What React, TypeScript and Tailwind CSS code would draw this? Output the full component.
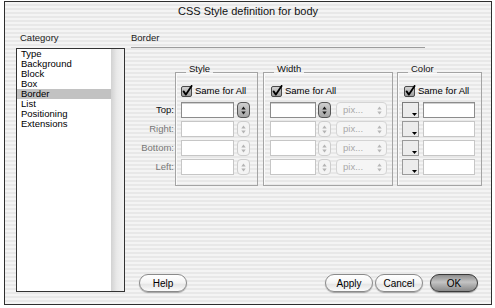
import React from "react";

const categories = ["Type", "Background", "Block", "Box", "Border", "List", "Positioning", "Extensions"];
const sides = ["Top:", "Right:", "Bottom:", "Left:"];

const CheckBox = () => (
  <svg width="12" height="12" viewBox="0 0 12 12" className="shrink-0">
    <defs>
      <linearGradient id="cbFill" x1="0" y1="0" x2="0" y2="1">
        <stop offset="0" stopColor="#d6d6d6" />
        <stop offset="1" stopColor="#9a9a9a" />
      </linearGradient>
    </defs>
    <rect x="0.5" y="1.5" width="10" height="10" rx="1.5" fill="url(#cbFill)" stroke="#4a4a4a" />
    <path d="M2.6 6.4 L4.9 9.6 L10.6 0.9" fill="none" stroke="#000" strokeWidth="1.8" strokeLinecap="round" strokeLinejoin="round" />
  </svg>
);

const Arrows = ({ color }: { color: string }) => (
  <svg width="5" height="9" viewBox="0 0 5 9">
    <polygon points="0.3,3.6 2.5,0.6 4.7,3.6" fill={color} />
    <polygon points="0.3,5.4 4.7,5.4 2.5,8.4" fill={color} />
  </svg>
);

const Stepper = ({ active }: { active?: boolean }) => (
  <div
    className={`w-[13px] h-[16px] shrink-0 rounded-[4px] border flex items-center justify-center ${
      active
        ? "border-[#555] bg-[linear-gradient(to_bottom,#cfcfcf,#a6a6a6)]"
        : "border-[#cdcdcd] bg-[#f4f4f4]"
    }`}
  >
    <Arrows color={active ? "#1a1a1a" : "#b4b4b4"} />
  </div>
);

const Field = ({ className, active }: { className: string; active?: boolean }) => (
  <div
    className={`h-[16px] shrink-0 bg-white border ${
      active ? "border-[#8c8c8c] shadow-[inset_0_1px_0_#d0d0d0]" : "border-[#c6c6c6]"
    } ${className}`}
  />
);

const UnitPopup = () => (
  <div className="w-[51px] h-[16px] shrink-0 rounded-[4px] border border-[#d4d4d4] bg-[#f5f5f5] flex items-center pl-[6px] pr-[4px] text-[#a9a9a9]">
    <span className="flex-1 leading-none">pix...</span>
    <Arrows color="#b8b8b8" />
  </div>
);

const Swatch = ({ active }: { active?: boolean }) => (
  <div
    className={`relative w-[17px] h-[16px] shrink-0 border bg-[#ececec] ${
      active ? "border-[#7c7c7c]" : "border-[#9a9a9a]"
    }`}
  >
    <svg width="5" height="3" viewBox="0 0 5 3" className="absolute right-[1px] bottom-[1px]">
      <polygon points="0,0 5,0 2.5,3" fill="#000" />
    </svg>
  </div>
);

const SameForAll = ({ className = "" }: { className?: string }) => (
  <div className={`h-[12px] flex items-center ${className}`}>
    <CheckBox />
    <span className="ml-[2px] leading-none">Same for All</span>
  </div>
);

const Group = ({ title, className, children }: { title: string; className: string; children: React.ReactNode }) => (
  <fieldset className={`border border-[#a4a4a4] shadow-[inset_1px_1px_0_#fbfbfb] ${className}`}>
    <legend className="ml-[10px] px-[3px] pb-[6px] leading-[12px] text-[#111]">{title}</legend>
    {children}
  </fieldset>
);

const Button = ({ label, primary, className = "" }: { label: string; primary?: boolean; className?: string }) => (
  <div
    className={`w-[48px] h-[18px] rounded-full border flex items-center justify-center text-[10px] text-black ${
      primary
        ? "border-[#3a3a3a] bg-[linear-gradient(to_bottom,#8e8e8e,#c4c4c4_45%,#b2b2b2_60%,#8a8a8a)] shadow-[0_1px_1px_rgba(0,0,0,0.35)]"
        : "border-[#8a8a8a] bg-[linear-gradient(to_bottom,#ffffff,#f4f4f4_50%,#e6e6e6_60%,#fbfbfb)] shadow-[0_1px_1px_rgba(0,0,0,0.3)]"
    } ${className}`}
  >
    {label}
  </div>
);

export default function App() {
  return (
    <div className="w-[495px] h-[308px] bg-white pt-[1px] pl-[4px] font-['Liberation_Sans',Arial,sans-serif] text-[9.5px] text-black">
      <div className="w-[488px] h-[304px] border border-[#2e2e2e] flex flex-col bg-[repeating-linear-gradient(to_bottom,#f4f4f4_0px,#f4f4f4_2px,#e8e8e8_2px,#e8e8e8_4px)]">
        <div className="h-[19px] flex items-center justify-center text-[11px] text-[#111]">CSS Style definition for body</div>

        <div className="flex-1 flex pl-[11px] pr-[9px] pt-[11px] pb-[12px] gap-[6px]">
          {/* category list */}
          <div className="w-[109px] flex flex-col">
            <div className="pl-[4px] leading-[12px] text-[#222]">Category</div>
            <div className="mt-[4px] h-[244px] border border-[#333] bg-white flex">
              <ul className="flex-1">
                {categories.map((c) => (
                  <li key={c} className={`h-[10px] leading-[10px] pl-[4px] ${c === "Border" ? "bg-[#c2c2c2]" : ""}`}>
                    {c}
                  </li>
                ))}
              </ul>
              <div className="w-[13px] bg-[linear-gradient(to_right,#d2d2d2,#e9e9e9_45%,#f3f3f3)]" />
            </div>
          </div>

          {/* border panel */}
          <div className="flex-1 flex flex-col">
            <div className="leading-[12px] text-[#222]">Border</div>
            <div className="mt-[3px] w-[294px] h-[1px] bg-[#9c9c9c]" />

            <div className="mt-[15px] flex items-start">
              <div className="w-[44px] pr-[1px] pt-[39px] flex flex-col gap-[3px]">
                {sides.map((s, i) => (
                  <div key={s} className={`h-[16px] flex items-center justify-end ${i === 0 ? "text-[#111]" : "text-[#777]"}`}>
                    {s}
                  </div>
                ))}
              </div>

              <Group title="Style" className="w-[83px]">
                <div className="pl-[5px] pt-[4px] pb-[10px]">
                  <SameForAll />
                  <div className="mt-[5px] flex flex-col gap-[3px]">
                    {sides.map((s, i) => (
                      <div key={s} className="flex">
                        <Field className="w-[53px]" active={i === 0} />
                        <div className="ml-[3px]">
                          <Stepper active={i === 0} />
                        </div>
                      </div>
                    ))}
                  </div>
                </div>
              </Group>

              <Group title="Width" className="ml-[5px] w-[130px]">
                <div className="pl-[6px] pt-[4px] pb-[10px]">
                  <SameForAll className="ml-[1px]" />
                  <div className="mt-[5px] flex flex-col gap-[3px]">
                    {sides.map((s, i) => (
                      <div key={s} className="flex">
                        <Field className="w-[46px]" active={i === 0} />
                        <div className="ml-[2px]">
                          <Stepper active={i === 0} />
                        </div>
                        <div className="ml-[5px]">
                          <UnitPopup />
                        </div>
                      </div>
                    ))}
                  </div>
                </div>
              </Group>

              <Group title="Color" className="ml-[4px] w-[85px]">
                <div className="pl-[4px] pt-[4px] pb-[10px]">
                  <SameForAll className="ml-[2px]" />
                  <div className="mt-[5px] flex flex-col gap-[3px]">
                    {sides.map((s, i) => (
                      <div key={s} className="flex">
                        <Swatch active={i === 0} />
                        <Field className="ml-[4px] w-[52px]" active={i === 0} />
                      </div>
                    ))}
                  </div>
                </div>
              </Group>
            </div>

            <div className="mt-auto flex justify-between pl-[8px] pr-[4px]">
              <Button label="Help" />
              <div className="flex">
                <Button label="Apply" />
                <Button label="Cancel" className="ml-[2px]" />
                <Button label="OK" primary className="ml-[7px]" />
              </div>
            </div>
          </div>
        </div>
      </div>
    </div>
  );
}
